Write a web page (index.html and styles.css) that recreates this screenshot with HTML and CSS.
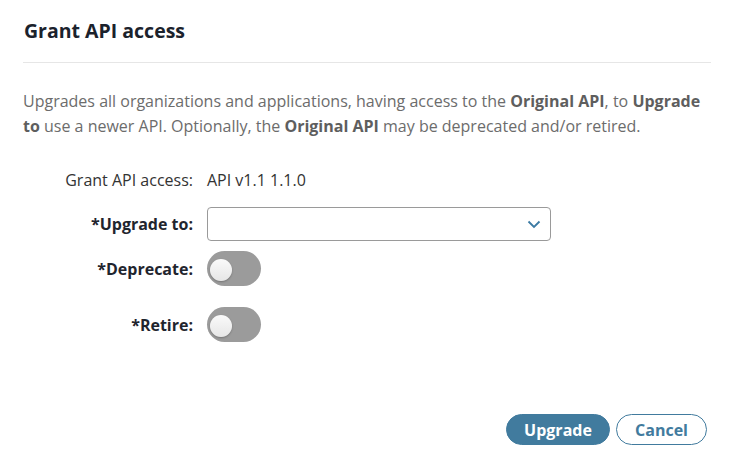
FILE: index.html
```html
<!DOCTYPE html>
<html>
<head>
<meta charset="utf-8">
<link rel="stylesheet" href="styles.css">
</head>
<body>
<div class="dialog">
  <h1 class="title">Grant API access</h1>
  <div class="divider"></div>
  <p class="desc">Upgrades all organizations and applications, having access to the <b>Original API</b>, to <b>Upgrade to</b> use a newer API. Optionally, the <b>Original API</b> may be deprecated and/or retired.</p>
  <div class="form">
    <div class="row row-info">
      <span class="label plain">Grant API access:</span>
      <span class="value">API v1.1 1.1.0</span>
    </div>
    <div class="row row-select">
      <span class="label">*Upgrade to:</span>
      <div class="select">
        <svg class="chev" width="14" height="9" viewBox="0 0 14 9"><path d="M1.5 1.5 L7 7 L12.5 1.5" fill="none" stroke="#3b7aa3" stroke-width="1.8"/></svg>
      </div>
    </div>
    <div class="row row-dep">
      <span class="label">*Deprecate:</span>
      <div class="toggle"><span class="knob"></span></div>
    </div>
    <div class="row row-ret">
      <span class="label">*Retire:</span>
      <div class="toggle"><span class="knob"></span></div>
    </div>
  </div>
  <div class="actions">
    <button class="btn primary">Upgrade</button>
    <button class="btn secondary">Cancel</button>
  </div>
</div>
</body>
</html>
```
FILE: styles.css
```css
* { box-sizing: border-box; }
html, body { margin: 0; padding: 0; background: #fff; }
body { font-family: "Open Sans", "Liberation Sans", sans-serif; }
.dialog {
  width: 734px;
  height: 459px;
  padding: 15px 23px 0 23px;
  display: flex;
  flex-direction: column;
}
.title {
  margin: 0;
  font-size: 19.5px;
  font-weight: 700;
  color: #1b222c;
  line-height: 32px;
  padding-left: 1px;
}
.divider {
  height: 1px;
  background: #e6e6e6;
  margin-top: 15px;
}
.desc {
  margin: 26px 0 0 0;
  font-size: 16px;
  line-height: 25px;
  color: #6c6c6c;
}
.desc b { font-weight: 700; color: #5e5e5e; }
.form {
  margin-top: 31px;
  display: flex;
  flex-direction: column;
}
.row {
  display: flex;
  align-items: center;
  gap: 14px;
}
.row-info { height: 20px; }
.row-select { margin-top: 17px; }
.row-dep { margin-top: 10px; }
.row-ret { margin-top: 21px; }
.label {
  width: 170px;
  text-align: right;
  font-size: 16px;
  font-weight: 700;
  color: #1f252e;
}
.label.plain { font-weight: 400; color: #333; }
.value { font-size: 16px; color: #333; }
.select {
  width: 344px;
  height: 34px;
  border: 1px solid #9a9a9a;
  border-radius: 4px;
  display: flex;
  align-items: center;
  justify-content: flex-end;
  padding-right: 9px;
}
.toggle {
  width: 54px;
  height: 35px;
  border-radius: 18px;
  background: #9b9b9b;
  position: relative;
  flex: none;
}
.knob {
  position: absolute;
  left: 3px;
  top: 8px;
  width: 22px;
  height: 22px;
  border-radius: 50%;
  background: linear-gradient(#fafafa, #e6e6e6);
  box-shadow: 0 1px 2px rgba(0,0,0,0.25);
}
.actions {
  margin-top: auto;
  margin-bottom: 14px;
  display: flex;
  justify-content: flex-end;
  gap: 6px;
  padding-right: 4px;
}
.btn {
  height: 31px;
  border-radius: 16px;
  font-family: "Open Sans", "Liberation Sans", sans-serif;
  font-size: 16px;
  font-weight: 700;
  padding: 0 15px;
  cursor: pointer;
}
.primary {
  background: #417b9e;
  color: #fff;
  border: 1px solid #417b9e;
  width: 104px;
}
.secondary {
  background: #fff;
  color: #417b9e;
  border: 1px solid #417b9e;
  width: 91px;
}
```
